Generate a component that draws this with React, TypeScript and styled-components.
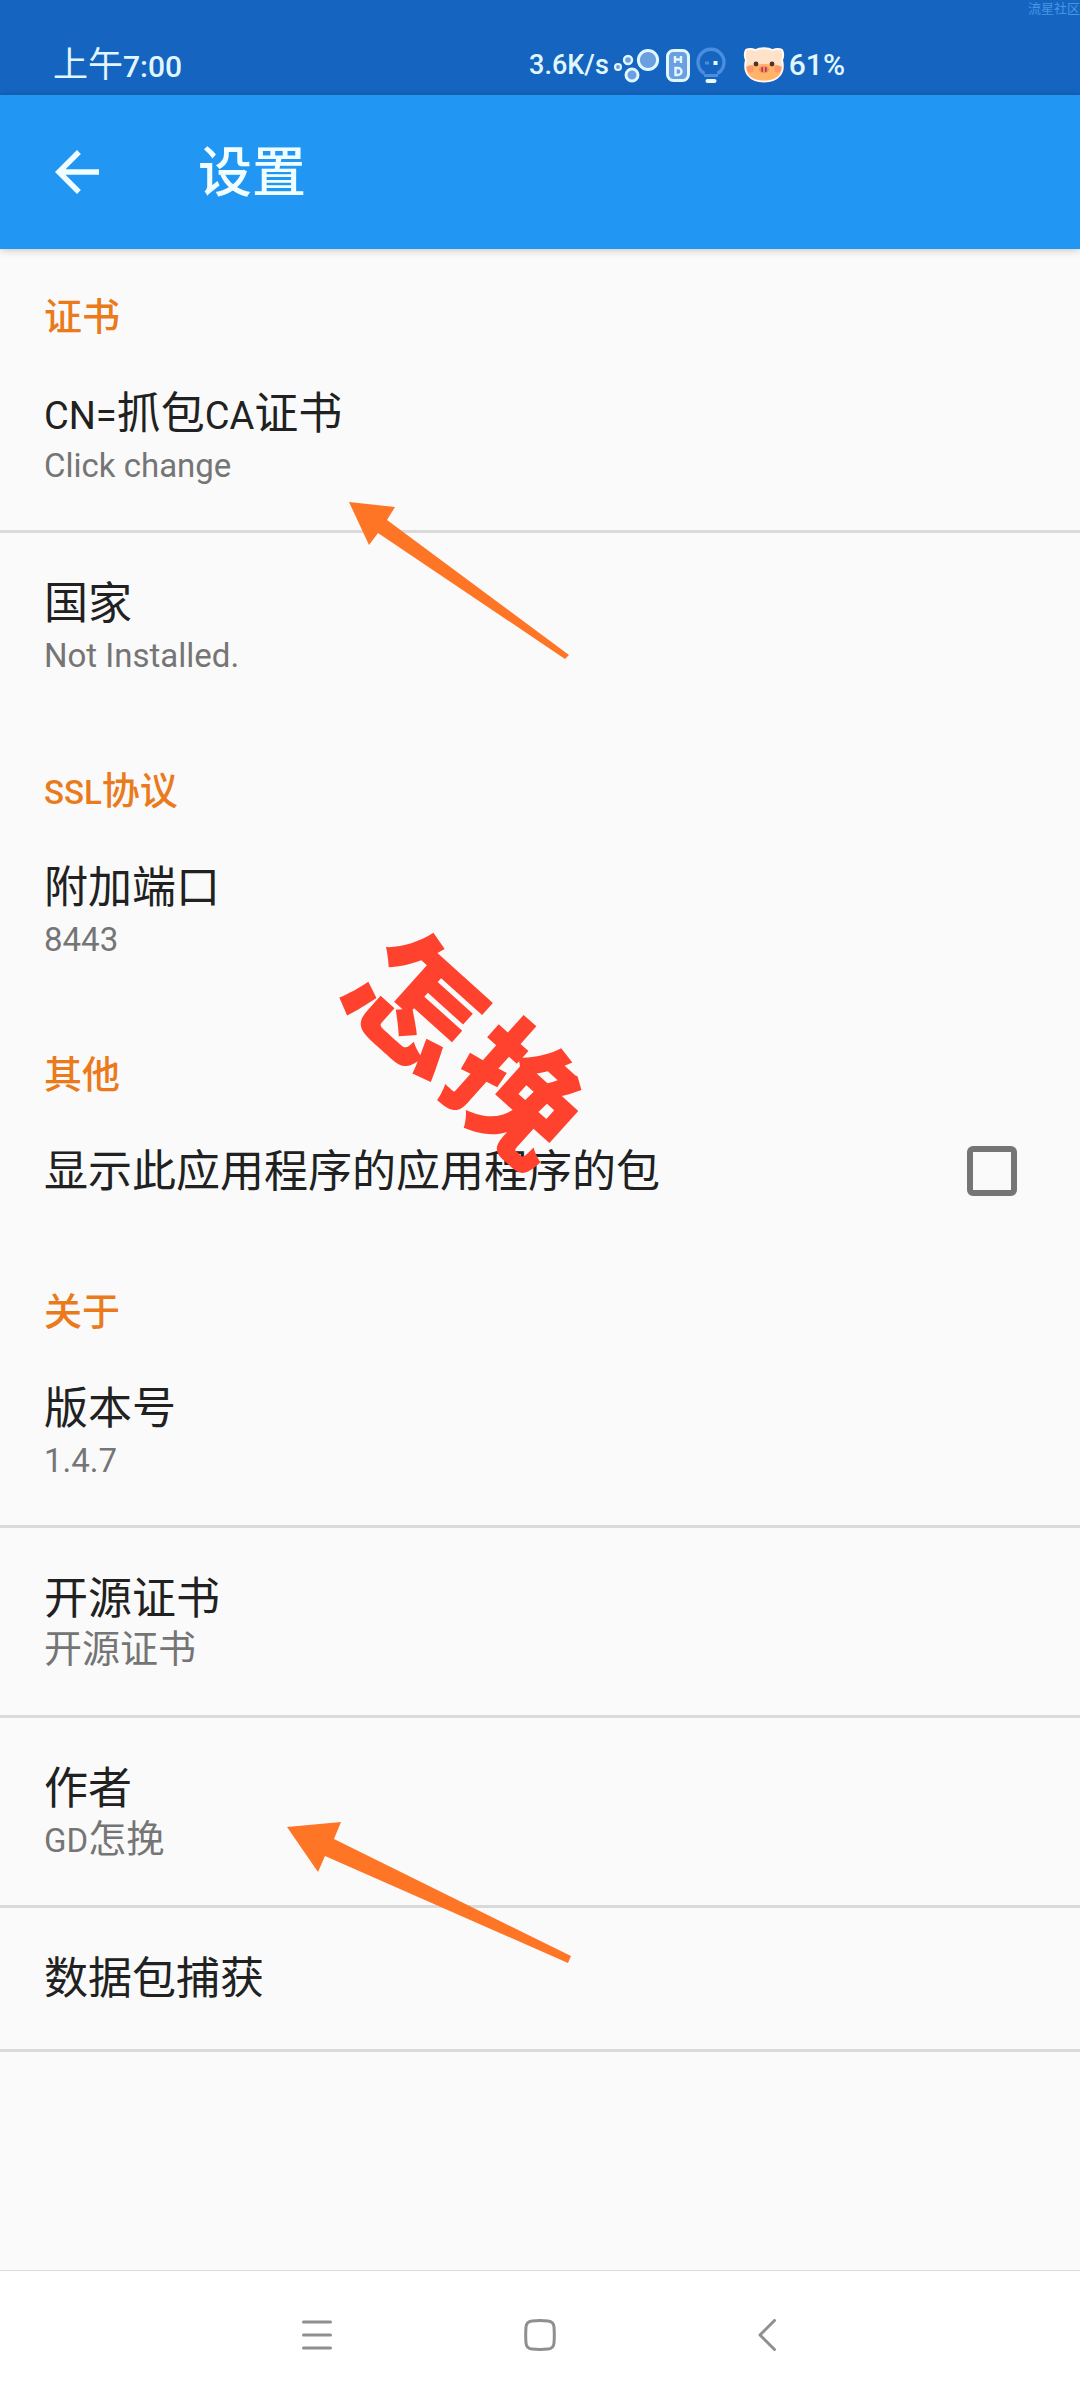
import React from "react";
import styled, { createGlobalStyle } from "styled-components";

const GlobalStyle = createGlobalStyle`
  * { box-sizing: border-box; }
  body {
    margin: 0;
    background: #fafafa;
    font-family: "Noto Sans CJK SC", Roboto, sans-serif;
    color: #212121;
  }
  button {
    border: 0;
    padding: 0;
    background: none;
    color: inherit;
    font: inherit;
    text-align: left;
  }
`;

const Page = styled.div`
  position: relative;
  display: flex;
  flex-direction: column;
  min-height: 100vh;
  overflow: hidden;
`;

const StatusBar = styled.header`
  display: flex;
  align-items: center;
  justify-content: space-between;
  height: 95px;
  padding: 34px 235px 0 53px;
  background: #1565c0;
  color: #e0f7ff;
`;

const Clock = styled.time`
  padding-bottom: 6px;
  font-size: 35px;
  line-height: 54px;
`;

const StatusGroup = styled.div`
  display: flex;
  align-items: center;
  gap: 4px;
`;

const StatusText = styled.span<{ $size: number }>`
  font-family: Roboto, sans-serif;
  font-size: ${(p) => p.$size}px;
  font-weight: 500;
  line-height: 60px;
`;

const Latin = styled.span<{ $size: number; $weight?: number }>`
  font-family: Roboto, sans-serif;
  font-size: ${(p) => p.$size}px;
  font-weight: ${(p) => p.$weight ?? 400};
  line-height: 1;
`;

const Watermark = styled.span`
  position: absolute;
  top: 0;
  right: 0;
  font-size: 13px;
  line-height: 15px;
  color: #4596e6;
`;

const AppBar = styled.div`
  display: flex;
  align-items: center;
  gap: 88px;
  height: 154px;
  padding: 0 44px;
  background: #2196f3;
  color: #f0feff;
  box-shadow: 0 1px 8px rgba(0, 0, 0, 0.22);
`;

const BackButton = styled.button`
  width: 66px;
  height: 66px;
  svg { display: block; }
`;

const AppTitle = styled.h1`
  margin: 0;
  padding-bottom: 6px;
  font-size: 54px;
  font-weight: 500;
  line-height: 72px;
`;

const Content = styled.main`
  flex: 1;
`;

const Group = styled.section`
  &:first-child > h2 { padding-top: 41px; }
`;

const GroupTitle = styled.h2`
  margin: 0;
  padding: 44px 44px 5px;
  font-size: 38px;
  font-weight: 500;
  line-height: 48px;
  color: #ea7a1b;
`;

const Row = styled.button<{ $divider?: boolean }>`
  display: block;
  width: 100%;
  padding: 39px 44px 46px;
  border-bottom: ${(p) => (p.$divider ? "3px solid #dadada" : "0")};
`;

const CheckRow = styled.label`
  display: flex;
  align-items: flex-end;
  justify-content: space-between;
  padding: 39px 63px 45px 44px;
`;

const RowTitle = styled.span`
  display: block;
  font-size: 44px;
  line-height: 56px;
`;

const RowSummary = styled.span`
  display: block;
  font-size: 38px;
  line-height: 46px;
  color: #757575;
`;

const Checkbox = styled.input`
  appearance: none;
  width: 50px;
  height: 50px;
  margin: 0;
  border: 6px solid #757575;
  border-radius: 6px;
  &:checked { background: #2196f3; }
`;

const NavBar = styled.nav`
  display: flex;
  justify-content: center;
  height: 130px;
  padding-bottom: 2px;
  border-top: 1px solid #dcdcdc;
  background: #ffffff;
`;

const NavButton = styled.button`
  display: flex;
  flex: 0 0 223px;
  align-items: center;
  justify-content: center;
`;

const Annotations = styled.svg`
  position: absolute;
  top: 0;
  left: 0;
  pointer-events: none;
`;

const Signature = styled.div`
  position: absolute;
  top: 957px;
  left: 340px;
  display: flex;
  gap: 6px;
  font-size: 130px;
  font-weight: 900;
  line-height: 170px;
  color: #ff422d;
  transform: rotate(42deg);
  pointer-events: none;
`;

const Bubbles = () => (
  <svg width="48" height="36" viewBox="1 0 48 36" fill="#6c9fe0" stroke="#e0f7ff">
    <circle cx="6" cy="20" r="3" strokeWidth="2" />
    <circle cx="16" cy="13" r="4" strokeWidth="2.4" />
    <circle cx="20" cy="28" r="6" strokeWidth="3" />
    <circle cx="36" cy="13" r="9.6" strokeWidth="3" />
  </svg>
);

const HdBadge = () => (
  <svg width="26" height="36" viewBox="0 0 26 36" fill="none" stroke="#e0f7ff">
    <rect x="2.5" y="3.5" width="21" height="30" rx="6" fill="#6c9fe0" strokeWidth="3" />
    <path d="M10 9v7M16 9v7M10 12.5h6" strokeWidth="2.4" />
    <path d="M10.5 21v7h2.5a3.5 3.5 0 0 0 0-7z" strokeWidth="2.4" />
  </svg>
);

const Bulb = () => (
  <svg width="44" height="36" viewBox="0 0 44 36" fill="none" stroke="#4b8ee0">
    <path d="M9.5 26.5A13 13 0 1 1 22.5 26.5" strokeWidth="3.4" />
    <path d="M9 28.5h14" strokeWidth="3" />
    <path d="M12.5 34h7" stroke="#e8fbff" strokeWidth="4" strokeLinecap="round" />
    <path d="M10 16h4" strokeWidth="3" />
    <path d="M18.5 16h4" stroke="#e8fbff" strokeWidth="4" />
  </svg>
);

const Pig = () => (
  <svg width="42" height="36" viewBox="0 0 42 36">
    <path
      d="M3 3C7 .8 10 2 12.5 3.2 17 .5 25 .5 29.5 3.2 32 2 35 .8 39 3c1.8 3 1.2 8 0 10 3 12-3 21.5-18 21.5S0 25 3 13C1.8 11 1.2 6 3 3z"
      fill="#ffe3c8"
      stroke="#fff8f0"
      strokeWidth="2"
    />
    <path d="M3 19.5C11 16 31 16 39 19.5 38.5 28 33 33.5 21 33.5S3.5 28 3 19.5z" fill="#ffb469" />
    <circle cx="7.5" cy="22" r="3.5" fill="#ff986d" />
    <circle cx="34.5" cy="22" r="3.5" fill="#ff986d" />
    <circle cx="13" cy="17" r="2.4" fill="#513027" />
    <circle cx="29" cy="17" r="2.4" fill="#513027" />
    <ellipse cx="21" cy="22.5" rx="5" ry="3.8" fill="#f98b70" />
    <path d="M19.2 21v3M22.8 21v3" stroke="#a84537" strokeWidth="1.8" strokeLinecap="round" />
  </svg>
);

export default function App() {
  return (
    <Page>
      <GlobalStyle />
      <StatusBar>
        <Clock>
          上午<Latin $size={30} $weight={500}>7:00</Latin>
        </Clock>
        <StatusGroup>
          <StatusText $size={27}>3.6K/s</StatusText>
          <Bubbles />
          <HdBadge />
          <Bulb />
          <Pig />
          <StatusText $size={30}>61%</StatusText>
        </StatusGroup>
      </StatusBar>
      <Watermark>流星社区</Watermark>

      <AppBar>
        <BackButton type="button" aria-label="返回">
          <svg width="66" height="66" viewBox="0 0 24 24" fill="currentColor">
            <path d="M20 11H7.83l5.59-5.59L12 4l-8 8 8 8 1.41-1.41L7.83 13H20v-2z" />
          </svg>
        </BackButton>
        <AppTitle>设置</AppTitle>
      </AppBar>

      <Content>
        <Group>
          <GroupTitle>证书</GroupTitle>
          <Row type="button" $divider>
            <RowTitle>
              <Latin $size={38}>CN=</Latin>抓包<Latin $size={38}>CA</Latin>证书
            </RowTitle>
            <RowSummary><Latin $size={33}>Click change</Latin></RowSummary>
          </Row>
          <Row type="button">
            <RowTitle>国家</RowTitle>
            <RowSummary><Latin $size={33}>Not Installed.</Latin></RowSummary>
          </Row>
        </Group>

        <Group>
          <GroupTitle><Latin $size={33} $weight={500}>SSL</Latin>协议</GroupTitle>
          <Row type="button">
            <RowTitle>附加端口</RowTitle>
            <RowSummary><Latin $size={33}>8443</Latin></RowSummary>
          </Row>
        </Group>

        <Group>
          <GroupTitle>其他</GroupTitle>
          <CheckRow>
            <RowTitle>显示此应用程序的应用程序的包</RowTitle>
            <Checkbox type="checkbox" />
          </CheckRow>
        </Group>

        <Group>
          <GroupTitle>关于</GroupTitle>
          <Row type="button" $divider>
            <RowTitle>版本号</RowTitle>
            <RowSummary><Latin $size={33}>1.4.7</Latin></RowSummary>
          </Row>
          <Row type="button" $divider>
            <RowTitle>开源证书</RowTitle>
            <RowSummary>开源证书</RowSummary>
          </Row>
          <Row type="button" $divider>
            <RowTitle>作者</RowTitle>
            <RowSummary><Latin $size={33}>GD</Latin>怎挽</RowSummary>
          </Row>
          <Row type="button" $divider>
            <RowTitle>数据包捕获</RowTitle>
          </Row>
        </Group>
      </Content>

      <NavBar>
        <NavButton type="button" aria-label="最近任务">
          <svg width="32" height="32" viewBox="0 0 32 32" stroke="#8f8f8f" strokeWidth="3" strokeLinecap="round">
            <path d="M2.5 3h27M2.5 16h27M2.5 29h27" />
          </svg>
        </NavButton>
        <NavButton type="button" aria-label="主屏幕">
          <svg width="32" height="32" viewBox="0 0 32 32" fill="none" stroke="#8f8f8f" strokeWidth="3">
            <path d="M8 1.9Q16 1.1 24 1.9 29.6 2.4 30 8 30.6 16 30 24 29.6 29.6 24 30.1 16 30.9 8 30.1 2.4 29.6 2 24 1.4 16 2 8 2.4 2.4 8 1.9z" />
          </svg>
        </NavButton>
        <NavButton type="button" aria-label="返回上一页">
          <svg width="32" height="32" viewBox="0 0 32 32" fill="none" stroke="#8f8f8f" strokeWidth="3" strokeLinecap="round" strokeLinejoin="round">
            <path d="M27.5 1.5 13 16l14.5 14.5" />
          </svg>
        </NavButton>
      </NavBar>

      <Annotations width="600" height="2000" viewBox="0 0 600 2000" fill="#ff7526" aria-hidden="true">
        <path d="M349 502 395 507 387 520 569 655 565 659 378 533 369 545z" />
        <path d="M287 1827 341 1822 334 1839 571 1956 568 1963 325 1856 318 1872z" />
      </Annotations>
      <Signature><span>怎</span><span>挽</span></Signature>
    </Page>
  );
}
